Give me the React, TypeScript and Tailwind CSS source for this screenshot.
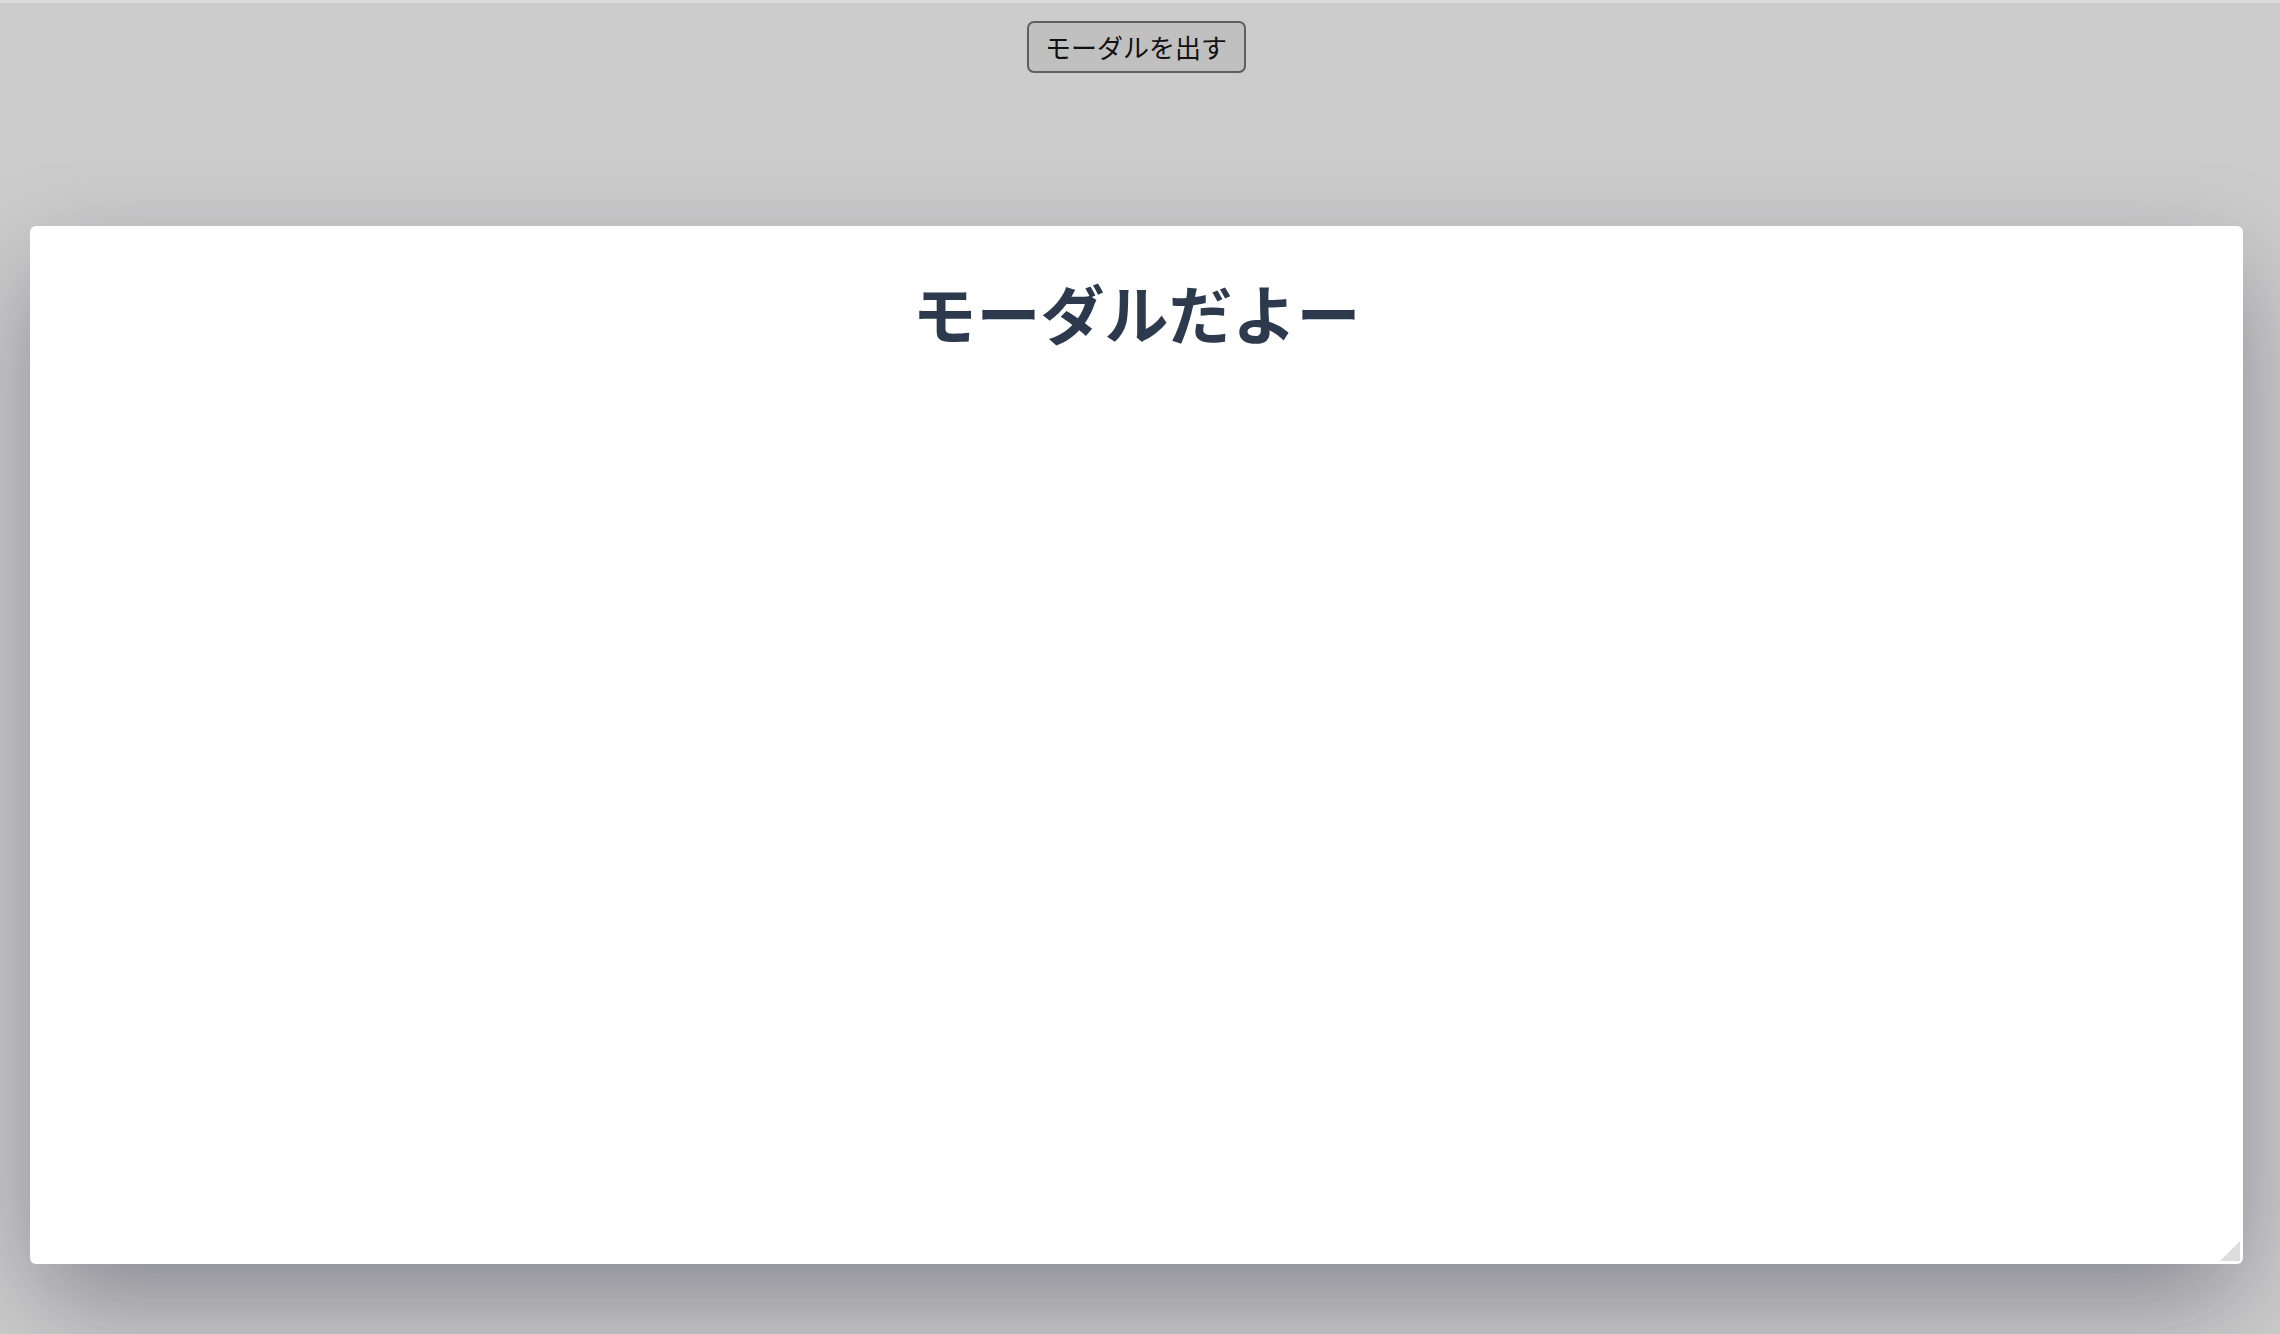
import React from "react";

export default function App() {
  return (
    <div
      className="relative w-[2280px] h-[1334px] overflow-hidden bg-[#cccccc]"
      style={{ fontFamily: '"Noto Sans CJK JP", "Noto Sans", sans-serif' }}
    >
      <div className="h-[3px] w-full bg-[#dcdcdc]" />
      <div className="flex w-[2272px] justify-center pt-[18px]">
        <button className="flex h-[52px] w-[219px] items-center justify-center rounded-[7px] border-2 border-[#5f5f5f] bg-[#c0c0c0] text-[26px] leading-none text-[#111111]">
          モーダルを出す
        </button>
      </div>
      <div
        className="relative ml-[30px] mt-[153px] h-[1038px] w-[2213px] rounded-[6px] bg-white"
        style={{ boxShadow: "0 40px 100px -10px rgba(20,20,45,0.4)" }}
      >
        <h1 className="pt-[45px] text-center text-[64px] font-bold leading-[80px] text-[#2d3a4e]">
          モーダルだよー
        </h1>
        <div className="absolute bottom-[3px] right-[3px] h-0 w-0 border-b-[20px] border-l-[20px] border-b-[#dcdcdc] border-l-transparent" />
      </div>
    </div>
  );
}
